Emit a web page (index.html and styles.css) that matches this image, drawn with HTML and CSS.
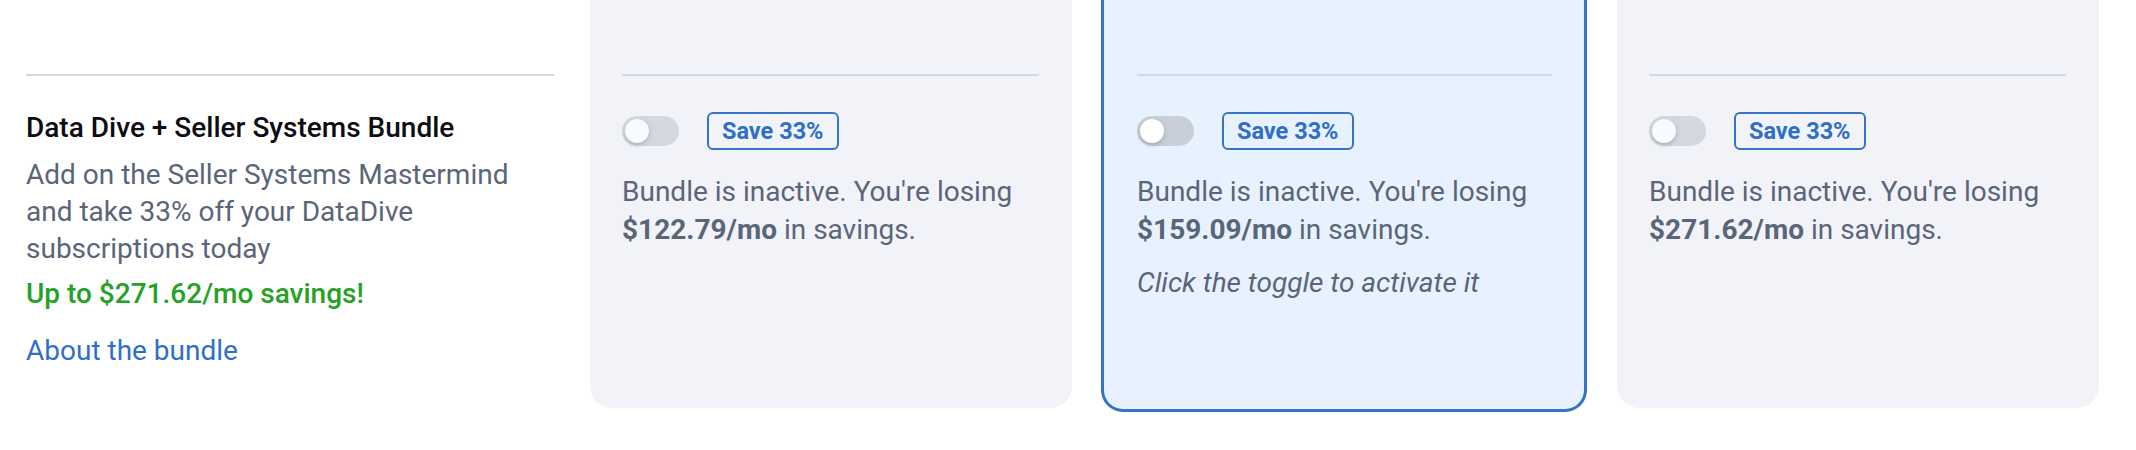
FILE: index.html
```html
<!DOCTYPE html>
<html lang="en">
<head>
<meta charset="utf-8">
<title>Bundle</title>
<link rel="stylesheet" href="styles.css">
</head>
<body>
<div class="row">
  <div class="info">
    <div class="head"></div>
    <div class="rule"></div>
    <h3 class="title">Data Dive + Seller Systems Bundle</h3>
    <p class="desc">Add on the Seller Systems Mastermind and take 33% off your DataDive subscriptions today</p>
    <p class="savings">Up to $271.62/mo savings!</p>
    <a class="about" href="#">About the bundle</a>
  </div>
  <div class="cards">
    <div class="card">
      <div class="head"></div>
      <div class="rule"></div>
      <div class="controls">
        <span class="toggle"><span class="knob"></span></span>
        <span class="badge">Save 33%</span>
      </div>
      <p class="status">Bundle is inactive. You're losing <b>$122.79/mo</b> in savings.</p>
    </div>
    <div class="card card--active">
      <div class="head"></div>
      <div class="rule"></div>
      <div class="controls">
        <span class="toggle"><span class="knob"></span></span>
        <span class="badge">Save 33%</span>
      </div>
      <p class="status">Bundle is inactive. You're losing <b>$159.09/mo</b> in savings.</p>
      <p class="hint">Click the toggle to activate it</p>
    </div>
    <div class="card">
      <div class="head"></div>
      <div class="rule"></div>
      <div class="controls">
        <span class="toggle"><span class="knob"></span></span>
        <span class="badge">Save 33%</span>
      </div>
      <p class="status">Bundle is inactive. You're losing <b>$271.62/mo</b> in savings.</p>
    </div>
  </div>
</div>
</body>
</html>
```
FILE: styles.css
```css
* { box-sizing: border-box; }
html, body { margin: 0; padding: 0; background: #ffffff; }
body {
  font-family: Roboto, "Noto Sans", "Liberation Sans", sans-serif;
  color: #5b6579;
  width: 2136px;
  height: 450px;
  overflow: hidden;
}
.row {
  display: flex;
  align-items: flex-start;
  padding-left: 26px;
}
.info {
  width: 528px;
  flex: none;
  margin-right: 36px;
  display: flex;
  flex-direction: column;
  align-items: flex-start;
}
.head { height: 74px; flex: none; }
.rule { height: 2px; background: #d3d9e2; align-self: stretch; flex: none; }
.title {
  margin: 36px 0 0;
  font-size: 28px;
  line-height: 32px;
  font-weight: 500;
  color: #0b0d12;
}
.desc {
  margin: 12px 0 0;
  font-size: 28px;
  line-height: 37px;
  color: #5b6579;
}
.savings {
  margin: 8px 0 0;
  font-size: 28px;
  line-height: 37px;
  font-weight: 500;
  color: #25a125;
}
.about {
  margin-top: 20px;
  font-size: 28px;
  line-height: 37px;
  color: #2f6fca;
  text-decoration: none;
}
.cards {
  display: flex;
  align-items: flex-start;
  gap: 29px;
}
.card {
  width: 482px;
  min-height: 408px;
  background: #f1f3f8;
  border-radius: 0 0 22px 22px;
  padding: 0 33px 0 32px;
  display: flex;
  flex-direction: column;
  align-items: flex-start;
}
.card--active {
  width: 486px;
  background: #e8f2fe;
  border: 3px solid #3573c7;
  border-top: none;
  padding: 0 32px 0 33px;
  min-height: 412px;
}
.card:last-child { margin-left: 1px; }
.controls {
  margin-top: 36px;
  display: flex;
  align-items: center;
  gap: 28px;
  height: 38px;
}
.toggle {
  width: 57px;
  height: 30px;
  border-radius: 15px;
  background: #d3d8e0;
  position: relative;
  flex: none;
}
.card--active .toggle { background: #c9cfd8; }
.knob {
  position: absolute;
  left: 3px;
  top: 3px;
  width: 24px;
  height: 24px;
  border-radius: 50%;
  background: #f9fafd;
  box-shadow: 0 2px 4px rgba(40, 50, 70, 0.25);
}
.card--active .knob { background: #ffffff; }
.badge {
  height: 38px;
  padding: 0 13px;
  border: 2px solid #3574c9;
  border-radius: 6px;
  color: #2f6fc8;
  font-weight: 700;
  font-size: 23.5px;
  line-height: 34px;
  background: transparent;
}
.status {
  margin: 23px 0 0;
  font-size: 28px;
  line-height: 38px;
  color: #5b6579;
}
.status b { font-weight: 700; }
.hint {
  margin: 15px 0 0;
  font-size: 28px;
  line-height: 37px;
  font-style: italic;
  color: #5b6579;
}
```
